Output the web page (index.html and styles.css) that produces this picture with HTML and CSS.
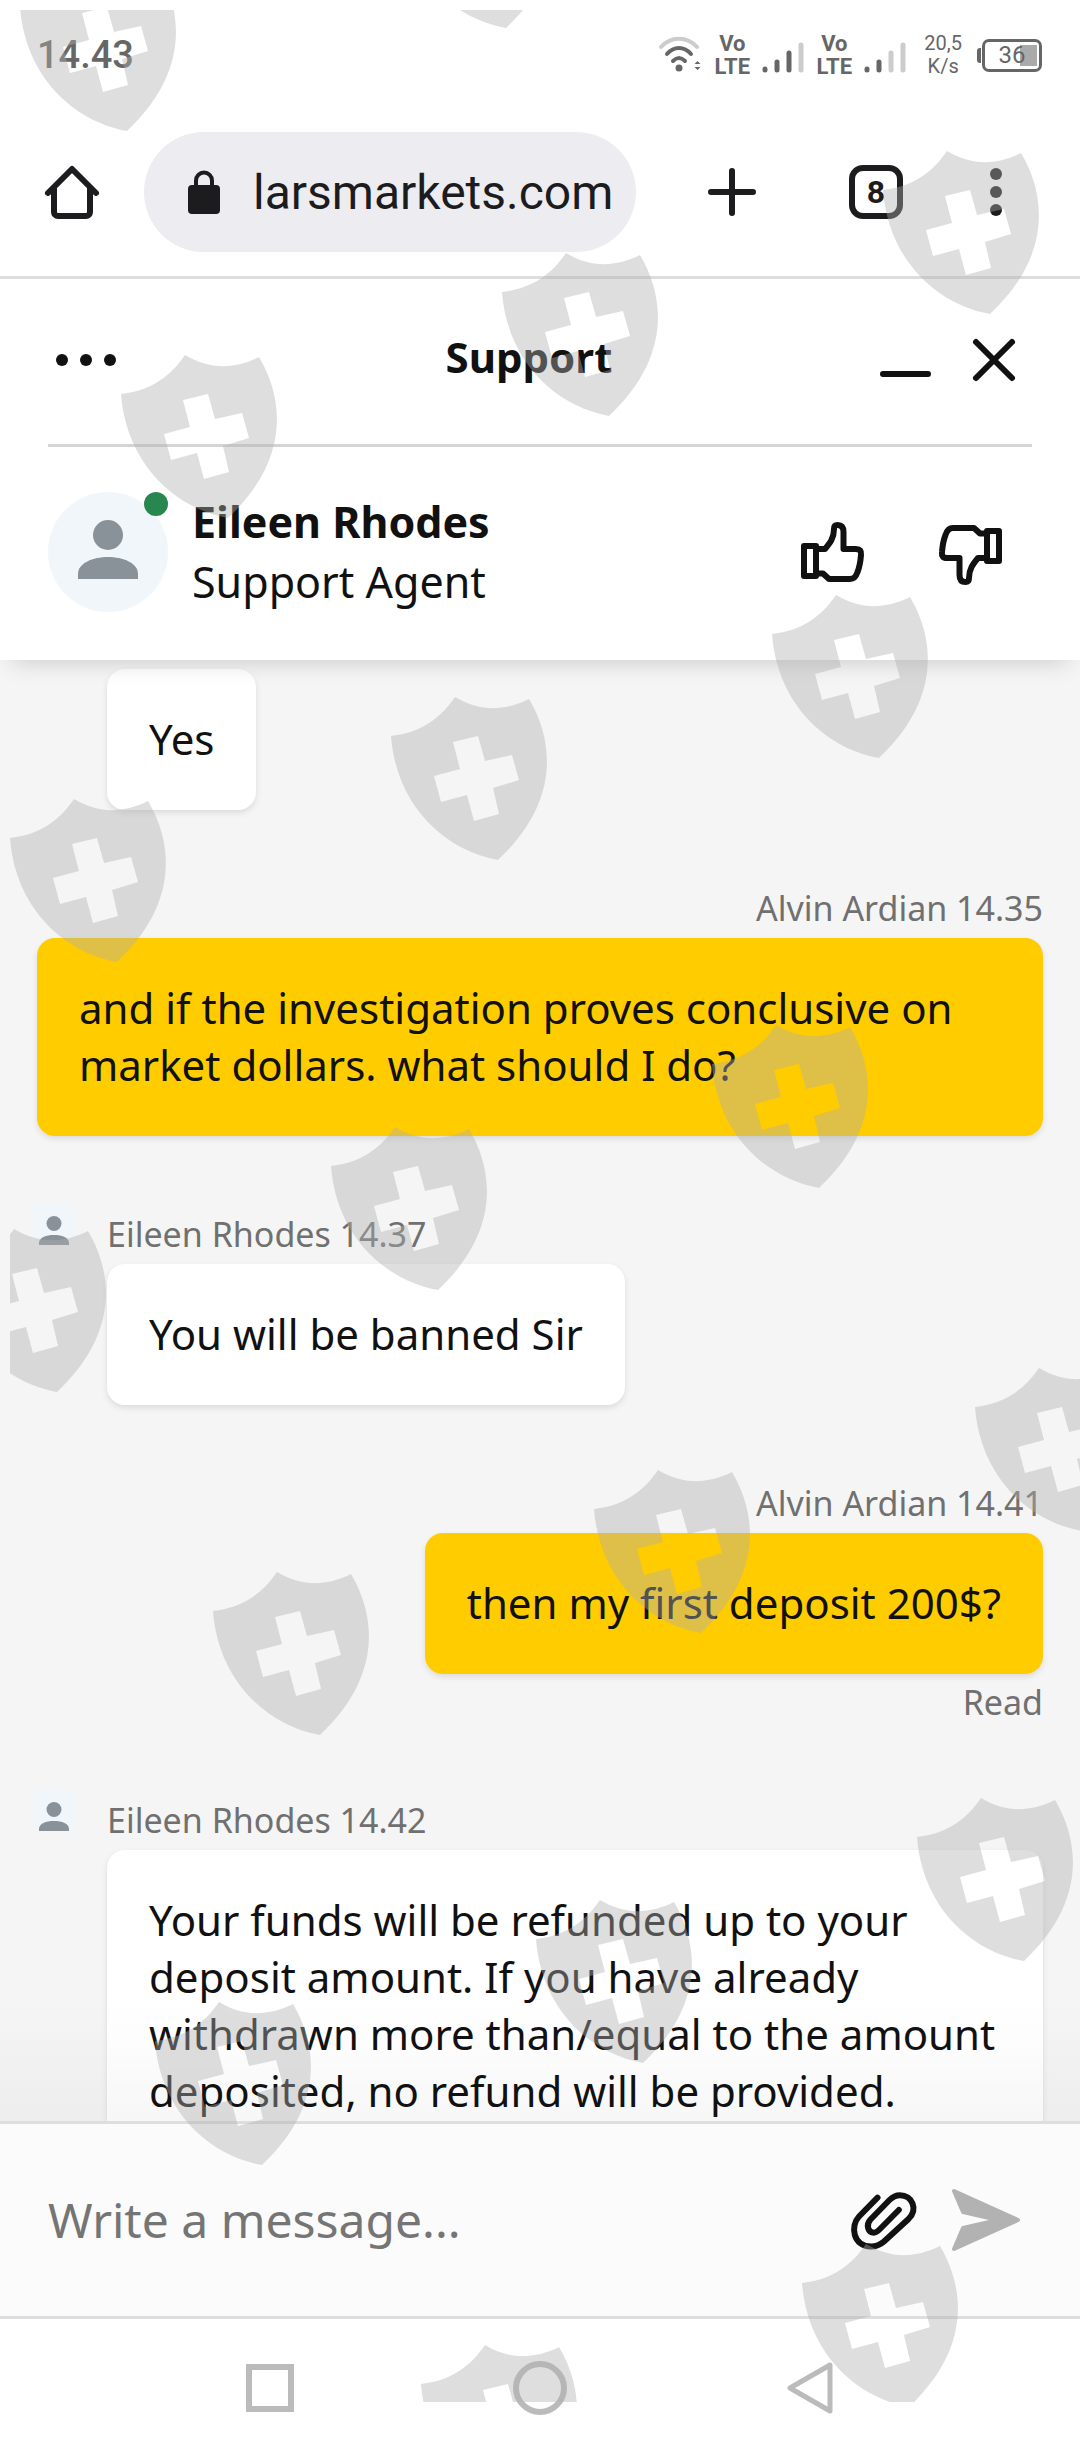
FILE: index.html
```html
<!DOCTYPE html>
<html lang="en">
<head>
<meta charset="utf-8">
<meta name="viewport" content="width=device-width, initial-scale=1">
<title>Support</title>
<link rel="stylesheet" href="styles.css">
</head>
<body>
<div class="screen">

  <div class="status">
    <span class="clock">14.43</span>
    <div class="indicators">
      <svg class="wifi" width="44" height="40" viewBox="0 0 44 40" fill="none" stroke="#666" stroke-width="4" stroke-linecap="round">
        <path d="M3 12C13 1 29 1 39 12" stroke="#ccc"/>
        <path d="M9 19C16 11 26 11 33 19"/>
        <path d="M15 26C19 22 23 22 27 26"/>
        <circle cx="21" cy="33" r="3.5" fill="#666" stroke="none"/>
        <path d="M36.500 29l3-3 3 3zM36.500 32l3 3 3-3z" fill="#666" stroke="none"/>
      </svg>
      <span class="volte"><span>Vo</span><span>LTE</span></span>
      <svg class="bars" width="42" height="40" viewBox="0 0 42 40" stroke="#666" stroke-width="5" stroke-linecap="round">
        <path d="M3 34v1M15 27v8M27 18v17"/>
        <path d="M39 10v25" stroke="#ccc"/>
      </svg>
      <span class="volte"><span>Vo</span><span>LTE</span></span>
      <svg class="bars" width="42" height="40" viewBox="0 0 42 40" stroke="#666" stroke-width="5" stroke-linecap="round">
        <path d="M3 34v1M15 27v8"/>
        <path d="M27 18v17M39 10v25" stroke="#ccc"/>
      </svg>
      <span class="speed">20,5<br>K/s</span>
      <span class="battery">36</span>
    </div>
  </div>

  <header class="toolbar">
    <button class="icon" aria-label="Home">
      <svg width="60" height="60" viewBox="0 0 60 60" fill="none" stroke="#1c1c1e" stroke-width="6" stroke-linecap="round" stroke-linejoin="round">
        <path d="M6 31L30 7L54 31M12 27V50a4 4 0 0 0 4 4H44a4 4 0 0 0 4-4V27"/>
      </svg>
    </button>
    <a class="address" href="#">
      <svg width="32" height="44" viewBox="0 0 32 44">
        <rect y="15" width="32" height="29" rx="4" fill="#1c1c1e"/>
        <path d="M8 17V10.500a8 8 0 0 1 16 0V17" fill="none" stroke="#1c1c1e" stroke-width="4"/>
      </svg>
      <span>larsmarkets.com</span>
    </a>
    <div class="tools">
      <button class="icon new-tab" aria-label="New tab">
        <svg width="60" height="60" viewBox="0 0 60 60" stroke="#1c1c1e" stroke-width="6" stroke-linecap="round"><path d="M30 9V51M9 30H51"/></svg>
      </button>
      <button class="tabs" aria-label="8 open tabs">8</button>
      <button class="icon" aria-label="Menu">
        <svg width="60" height="60" viewBox="0 0 60 60" fill="#1c1c1e"><circle cx="30" cy="12" r="6"/><circle cx="30" cy="30" r="6"/><circle cx="30" cy="48" r="6"/></svg>
      </button>
    </div>
  </header>

  <section class="widget-head">
    <div class="title-row">
      <button class="icon options" aria-label="Chat options">
        <svg width="72" height="48" viewBox="0 0 72 48" fill="#111"><circle cx="12" cy="24" r="6"/><circle cx="36" cy="24" r="6"/><circle cx="60" cy="24" r="6"/></svg>
      </button>
      <h1>Support</h1>
      <div class="window-actions">
        <button class="icon" aria-label="Minimize">
          <svg width="60" height="48" viewBox="0 0 60 48" stroke="#111" stroke-width="6" stroke-linecap="round"><path d="M7 38H52"/></svg>
        </button>
        <button class="icon" aria-label="Close">
          <svg width="48" height="48" viewBox="0 0 48 48" stroke="#111" stroke-width="6" stroke-linecap="round"><path d="M6 6L42 42M42 6L6 42"/></svg>
        </button>
      </div>
    </div>
    <div class="agent">
      <div class="avatar">
        <svg width="120" height="120" viewBox="0 0 120 120" fill="#8a9299"><circle cx="60" cy="43" r="15"/><path d="M30 87V82C30 71 45 65 60 65S90 71 90 82V87Z"/></svg>
        <span class="online"></span>
      </div>
      <div class="who"><strong>Eileen Rhodes</strong><span>Support Agent</span></div>
      <div class="rate">
        <button class="icon" aria-label="Rate as good">
          <svg width="72" height="72" viewBox="0 0 72 72" fill="none" stroke="#111" stroke-width="6" stroke-linejoin="round">
            <path id="thumb" d="M8 30H20V60H8ZM20 33H29C34 27 38 22 38 13C38 10 39 9 41.500 9C45 9 47.500 11 47.500 16V33H60C64 33 65.500 35 65 39C64.500 45 64 50 61.500 56C60 61 58 63 54 63H33L27 57.500H20"/>
          </svg>
        </button>
        <button class="icon" aria-label="Rate as bad">
          <svg width="72" height="72" viewBox="0 0 72 72" fill="none" stroke="#111" stroke-width="6" stroke-linejoin="round">
            <use href="#thumb" transform="rotate(180 36.500 37.500)"/>
          </svg>
        </button>
      </div>
    </div>
  </section>

  <main class="chat">
    <article class="msg them">
      <p class="bubble">Yes</p>
    </article>
    <article class="msg me">
      <div class="meta">Alvin Ardian 14.35</div>
      <p class="bubble">and if the investigation proves conclusive on market dollars. what should I do?</p>
    </article>
    <article class="msg them">
      <div class="meta">
        <svg class="mini" width="42" height="43" viewBox="0 0 42 43" fill="#8a9299"><rect width="42" height="43" fill="#f1f6fa"/><circle cx="21" cy="20.500" r="7.500"/><path d="M6 42V40C6 34.500 13 32 21 32S36 34.500 36 40V42Z"/></svg>
        Eileen Rhodes 14.37
      </div>
      <p class="bubble">You will be banned Sir</p>
    </article>
    <article class="msg me">
      <div class="meta">Alvin Ardian 14.41</div>
      <p class="bubble">then my first deposit 200$?</p>
      <div class="receipt">Read</div>
    </article>
    <article class="msg them">
      <div class="meta">
        <svg class="mini" width="42" height="43" viewBox="0 0 42 43" fill="#8a9299"><rect width="42" height="43" fill="#f1f6fa"/><circle cx="21" cy="20.500" r="7.500"/><path d="M6 42V40C6 34.500 13 32 21 32S36 34.500 36 40V42Z"/></svg>
        Eileen Rhodes 14.42
      </div>
      <p class="bubble">Your funds will be refunded up to your deposit amount. If you have already withdrawn more than/equal to the amount deposited, no refund will be provided.</p>
    </article>
  </main>

  <form class="composer">
    <input type="text" placeholder="Write a message..." aria-label="Write a message">
    <button class="icon" type="button" aria-label="Attach a file">
      <svg width="72" height="72" viewBox="0 0 72 72" fill="none" stroke="#111" stroke-width="6" stroke-linecap="round">
        <path d="M29.500 13.700L11 32.500C2 42 5 62.500 23 62.500C28 62.500 32 61 36 57.500L60.500 35C70.500 25 64 11.300 52 11.300C48 11.300 45 12.500 41.500 16L22.500 35.500C17.500 41 20 48.700 26 48.700C28 48.700 29.500 47.500 31.500 45.500L50.800 26"/>
      </svg>
    </button>
    <button class="icon send" type="submit" aria-label="Send">
      <svg width="72" height="72" viewBox="0 0 72 72" fill="#b2b2b2" stroke="#b2b2b2" stroke-width="4" stroke-linejoin="round">
        <path d="M4 7L68 36L4 65L13 44L48 36L13 28Z"/>
      </svg>
    </button>
  </form>

  <nav class="system">
    <button class="icon" aria-label="Recent apps"><svg width="60" height="60" viewBox="0 0 60 60" fill="none" stroke="#bbb" stroke-width="6"><path d="M9 9H51V51H9Z"/></svg></button>
    <button class="icon" aria-label="Home screen"><svg width="60" height="60" viewBox="0 0 60 60" fill="none" stroke="#aaa" stroke-opacity=".8" stroke-width="6"><circle cx="30" cy="30" r="24"/></svg></button>
    <button class="icon" aria-label="Back"><svg width="60" height="60" viewBox="0 0 60 60" fill="none" stroke="#bbb" stroke-width="5" stroke-linejoin="round"><path d="M10 30L50 7V53Z"/></svg></button>
  </nav>

  <svg class="watermark" aria-hidden="true">
    <defs>
      <path id="shield" fill-rule="evenodd" d="M-64 39C-38 36 -17 25 0 0C23 14 48 15 74 2C100 46 104 106 43 163C-12 153 -59 107 -64 39ZM-2 45L5 72L-21 79L-14 105L12 98L19 124L44 117L38 91L64 83L57 58L30 64L23 39Z"/>
    </defs>
    <g transform="translate(-10 -10)">
      <use href="#shield" x="84" y="-32"/>
      <use href="#shield" x="463" y="-135"/>
      <use href="#shield" x="947" y="151"/>
      <use href="#shield" x="566" y="253"/>
      <use href="#shield" x="185" y="355"/>
      <use href="#shield" x="836" y="595"/>
      <use href="#shield" x="455" y="697"/>
      <use href="#shield" x="74" y="799"/>
      <use href="#shield" x="776" y="1025"/>
      <use href="#shield" x="395" y="1127"/>
      <use href="#shield" x="14" y="1229"/>
      <use href="#shield" x="1039" y="1368"/>
      <use href="#shield" x="658" y="1470"/>
      <use href="#shield" x="277" y="1572"/>
      <use href="#shield" x="981" y="1798"/>
      <use href="#shield" x="600" y="1900"/>
      <use href="#shield" x="219" y="2002"/>
      <use href="#shield" x="866" y="2244"/>
      <use href="#shield" x="485" y="2345"/>
    </g>
  </svg>
</div>
</body>
</html>
```
FILE: styles.css
```css
* { box-sizing: border-box; }

body {
  margin: 0;
  background: #fff;
  color: #111;
  font-family: "Noto Sans", sans-serif;
}

h1, p { margin: 0; }

button {
  border: 0;
  padding: 0;
  background: none;
  color: inherit;
  font: inherit;
}

svg { display: block; }

.icon { display: flex; flex: none; }

.screen {
  position: relative;
  display: flex;
  flex-direction: column;
  height: 100vh;
}

/* Status bar */
.status {
  flex: none;
  display: flex;
  align-items: center;
  justify-content: space-between;
  height: 108px;
  padding: 2px 38px 0 37px;
  color: #666;
  font-family: Roboto, sans-serif;
}

.clock { font-size: 38px; font-weight: 500; }

.indicators { display: flex; align-items: center; }

.volte {
  display: flex;
  flex-direction: column;
  align-items: center;
  width: 40px;
  margin: 0 10px;
  font-size: 22px;
  font-weight: 700;
  line-height: 23px;
}

.speed {
  margin: 0 14px 0 18px;
  font-size: 20px;
  line-height: 23px;
  text-align: center;
}

.battery {
  position: relative;
  width: 60px;
  height: 33px;
  margin-left: 6px;
  border: 3px solid #666;
  border-radius: 7px;
  background: linear-gradient(#aaa, #aaa) 35px center / 17px 21px no-repeat;
  font-size: 24px;
  line-height: 27px;
  text-align: center;
}

.battery::before {
  content: "";
  position: absolute;
  top: 6px;
  left: -8px;
  width: 4px;
  height: 15px;
  border-radius: 3px 0 0 3px;
  background: #666;
}

/* Browser toolbar */
.toolbar {
  flex: none;
  display: flex;
  align-items: center;
  gap: 42px;
  padding: 24px 54px 24px 42px;
  border-bottom: 3px solid #dedede;
  color: #1c1c1e;
  font-family: Roboto, sans-serif;
}

.address {
  flex: 1;
  display: flex;
  align-items: center;
  gap: 33px;
  min-width: 0;
  height: 120px;
  padding-left: 44px;
  border-radius: 60px;
  background: #ececf1;
  color: inherit;
  font-size: 48px;
  text-decoration: none;
}

.tools {
  display: flex;
  align-items: center;
  gap: 63px;
  margin-left: 24px;
}

.new-tab { margin-right: 24px; }

.tabs {
  width: 54px;
  height: 54px;
  border: 6px solid #1c1c1e;
  border-radius: 14px;
  font-size: 32px;
  font-weight: 700;
  line-height: 42px;
}

/* Chat header */
.widget-head {
  position: relative;
  z-index: 1;
  flex: none;
  background: #fff;
  box-shadow: 0 12px 24px -12px rgba(0, 0, 0, .2);
}

.title-row {
  display: grid;
  grid-template-columns: 1fr auto 1fr;
  align-items: center;
  height: 165px;
  padding: 0 62px 4px 40px;
}

.options { padding: 0 10px; }

.title-row h1 {
  padding-bottom: 6px;
  font-size: 42px;
  line-height: 60px;
}

.window-actions {
  display: flex;
  justify-content: flex-end;
  gap: 34px;
}

.agent {
  display: flex;
  align-items: center;
  gap: 24px;
  margin: 0 48px;
  padding: 45px 26px 48px 0;
  border-top: 3px solid #d4d4d4;
}

.avatar {
  position: relative;
  border-radius: 50%;
  background: #f1f6fa;
}

.online {
  position: absolute;
  top: 0;
  right: 0;
  width: 24px;
  height: 24px;
  border-radius: 50%;
  background: #28874f;
}

.who {
  display: flex;
  flex: 1;
  flex-direction: column;
  font-size: 43px;
  line-height: 60px;
}

.rate { display: flex; gap: 66px; }

/* Conversation */
.chat {
  flex: 1;
  display: flex;
  flex-direction: column;
  gap: 74px;
  min-height: 0;
  padding: 9px 37px 0;
  overflow: hidden;
  background: #f5f5f5;
}

.msg {
  display: flex;
  flex: none;
  flex-direction: column;
  align-items: flex-start;
}

.them { padding-left: 70px; }

.me { align-items: flex-end; }

.meta, .receipt {
  position: relative;
  color: #707070;
  font-size: 34px;
}

.meta { margin-bottom: 6px; line-height: 48px; }

.receipt { margin-top: 8px; line-height: 40px; }

.mini {
  position: absolute;
  top: -7px;
  left: -74px;
}

.bubble {
  padding: 41px 42px 43px;
  border-radius: 18px;
  background: #fff;
  box-shadow: 0 3px 6px rgba(0, 0, 0, .1);
  font-size: 42px;
  line-height: 57px;
}

.me .bubble { background: #fc0; }

/* Message box */
.composer {
  position: relative;
  flex: none;
  display: flex;
  align-items: center;
  height: 198px;
  padding: 0 58px 0 48px;
  border: solid #dedede;
  border-width: 3px 0;
  background: #fbfbfb;
}

.composer::before {
  content: "";
  position: absolute;
  right: 0;
  bottom: 100%;
  left: 0;
  height: 120px;
  margin-bottom: 3px;
  background: linear-gradient(transparent, rgba(0, 0, 0, .03));
  pointer-events: none;
}

.composer input {
  flex: 1;
  min-width: 0;
  padding: 0;
  border: 0;
  background: none;
  font: 48px/64px "Noto Sans", sans-serif;
}

.composer input::placeholder { color: #757575; opacity: 1; }

.send { margin-left: 30px; }

/* System navigation */
.system {
  flex: none;
  display: flex;
  align-items: center;
  justify-content: center;
  gap: 210px;
  height: 141px;
  padding-bottom: 3px;
}

.watermark {
  position: absolute;
  z-index: 2;
  top: 10px;
  left: 10px;
  width: calc(100% - 10px);
  height: calc(100% - 68px);
  fill: #afafaf;
  fill-opacity: .41;
  pointer-events: none;
}
```
